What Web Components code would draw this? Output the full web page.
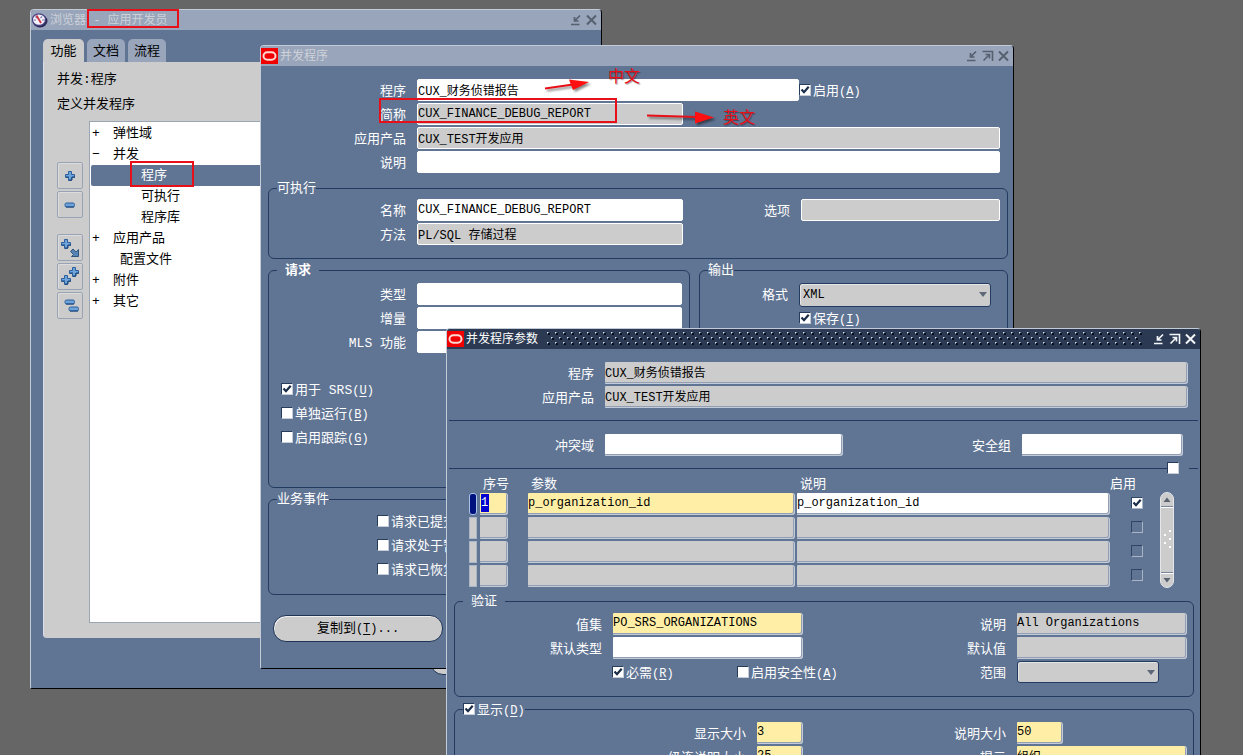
<!DOCTYPE html>
<html lang="zh-CN">
<head>
<meta charset="utf-8">
<title>并发程序参数</title>
<style>
  :root {
    --blue: #607493;
    --line: #233b60;
    --grey: #cccccc;
    --yellow: #ffefa6;
  }
  * { box-sizing: border-box; }
  html, body { height: 100%; }
  body {
    margin: 0;
    overflow: hidden;
    position: relative;
    background: #666666;
    color: #fff;
    font: 13px/22px "Liberation Mono", "Noto Sans CJK SC", monospace;
  }
  .nav { left: 30px; top: 9px; width: 572px; height: 680px; }
  .program { left: 260px; top: 45px; width: 754px; height: 624px; }
  .params { left: 446px; top: 328px; width: 755px; }

  .stack { display: flex; flex-direction: column; gap: 2px; }
  .row { display: flex; align-items: flex-start; }
  .end { margin-left: auto; }

  .program-body { padding: 13px 5px 0 7px; --label: 138px; }
  .program-body .head { padding-right: 8px; margin-bottom: 8px; }
  .program-body field-group { --label: 137px; margin-bottom: 4px; }
  .w-name { width: 531px; }
  .w-short { width: 415px; }
  .w-option { width: 270px; --label: 60px; }
  .pair { display: grid; grid-template-columns: 422fr 309fr; gap: 9px; }
  .pair .out { --label: 88px; }
  .checks { margin: 23px 0 0 12px; }
  .events { margin-left: 108px; }
  .copy { margin: 20px 0 0 5px; width: 170px; }

  .params-body { --label: 147px; padding-top: 13px; }
  .params-body .head { padding-right: 12px; }
  .params-body .domain { padding-right: 17px; }
  .rule { height: 1px; margin: 12px 2px 13px; background: var(--line); }
  .rule-row { display: flex; align-items: center; height: 12px; margin: 6px 2px 0; }
  .rule-row i { height: 1px; background: var(--line); flex: 1; }
  .rule-row i:last-child { flex: none; width: 9px; margin-left: 10px; }
  .params-body field-group { margin: 5px 6px 0 7px; }
  .w-half { width: 348px; }
  .w-dom { width: 396px; }
  .w-sec { width: 232px; --label: 60px; }
  .w-right { width: 241px; --label: 60px; }
  .needed { margin-left: 157px; width: 125px; }
</style>
</head>
<body>

<desk-window class="nav" icon="globe" heading="浏览器 - 应用开发员" controls="min close">
  <nav-panel></nav-panel>
</desk-window>

<desk-window class="program" icon="oracle" heading="并发程序" controls="min max close">
  <div class="program-body">
    <div class="stack head">
      <div class="row">
        <form-field class="w-name" label="程序" value="CUX_财务侦错报告"></form-field>
        <check-item checked text="启用" key="A"></check-item>
      </div>
      <form-field class="w-short" label="简称" value="CUX_FINANCE_DEBUG_REPORT" tone="grey"></form-field>
      <form-field label="应用产品" value="CUX_TEST开发应用" tone="grey"></form-field>
      <form-field label="说明"></form-field>
    </div>
    <field-group heading="可执行" style="--end:13px;--side:7px">
      <div class="row">
        <form-field class="w-short" style="width:414px" label="名称" value="CUX_FINANCE_DEBUG_REPORT"></form-field>
        <form-field class="w-option end" label="选项" tone="grey"></form-field>
      </div>
      <form-field style="width:414px" label="方法" value="PL/SQL 存储过程" tone="grey"></form-field>
    </field-group>
    <div class="pair">
      <field-group heading="请求" strong style="--start:6px;--end:39px;--side:7px">
        <form-field label="类型"></form-field>
        <form-field label="增量"></form-field>
        <form-field label="MLS 功能"></form-field>
        <div class="stack checks">
          <check-item checked text="用于 SRS" key="U"></check-item>
          <check-item text="单独运行" key="B"></check-item>
          <check-item text="启用跟踪" key="G"></check-item>
        </div>
      </field-group>
      <field-group class="out" heading="输出" style="--start:6px;--side:16px">
        <form-field label="格式" kind="select" value="XML"></form-field>
        <check-item checked text="保存" key="I" style="margin-left:99px"></check-item>
      </field-group>
    </div>
    <field-group heading="业务事件" style="--end:14px">
      <div class="stack events">
        <check-item text="请求已提交"></check-item>
        <check-item text="请求处于暂挂"></check-item>
        <check-item text="请求已恢复"></check-item>
      </div>
    </field-group>
    <push-button class="copy" text="复制到" key="T" tail="..."></push-button>
  </div>
</desk-window>

<desk-window class="params" active icon="oracle" heading="并发程序参数" controls="min max close">
  <div class="params-body">
    <div class="stack head">
      <form-field bevel label="程序" value="CUX_财务侦错报告" tone="grey"></form-field>
      <form-field bevel label="应用产品" value="CUX_TEST开发应用" tone="grey"></form-field>
    </div>
    <div class="rule"></div>
    <div class="row domain">
      <form-field bevel class="w-dom" label="冲突域"></form-field>
      <form-field bevel class="w-sec end" label="安全组"></form-field>
    </div>
    <div class="rule-row"><i></i><check-item bare name="弹性域"></check-item><i></i></div>
    <param-table></param-table>
    <field-group heading="验证" wide style="--start:5px;--end:13px;--side:6px">
      <div class="row">
        <form-field bevel class="w-half" label="值集" value="PO_SRS_ORGANIZATIONS" tone="yellow"></form-field>
        <form-field bevel class="w-right end" label="说明" value="All Organizations" tone="grey"></form-field>
      </div>
      <div class="row">
        <form-field bevel class="w-half" label="默认类型"></form-field>
        <form-field bevel class="w-right end" label="默认值" tone="grey"></form-field>
      </div>
      <div class="row">
        <check-item class="needed" checked text="必需" key="R"></check-item>
        <check-item text="启用安全性" key="A"></check-item>
        <form-field class="w-right end" label="范围" kind="select" style="--control:142px"></form-field>
      </div>
    </field-group>
    <field-group style="--start:6px;--end:40px;--side:6px">
      <check-item slot="heading" checked text="显示" key="D"></check-item>
      <div class="row">
        <form-field bevel class="w-half" style="--label:291px" label="显示大小" value="3" tone="yellow"></form-field>
        <form-field bevel class="w-right end" style="--control:46px" label="说明大小" value="50" tone="yellow"></form-field>
      </div>
      <div class="row">
        <form-field bevel class="w-half" style="--label:291px" label="级连说明大小" value="25" tone="yellow"></form-field>
        <form-field bevel class="w-right end" label="提示" value="组织" tone="yellow"></form-field>
      </div>
    </field-group>
  </div>
</desk-window>

<desk-notes></desk-notes>

<script>
const BASE = `*{box-sizing:border-box}`;
const tick = `url("data:image/svg+xml,%3Csvg xmlns='http://www.w3.org/2000/svg' width='10' height='10'%3E%3Cpath d='M1.5 4.5L4 7.2L8.7 1.8' fill='none' stroke='%23182c48' stroke-width='2.2'/%3E%3C/svg%3E")`;

const ICONS = {
  oracle: `<svg width="17" height="16" viewBox="0 0 17 16"><rect width="17" height="16" fill="#f00000"/><rect x="2.5" y="4.300" width="12" height="7.400" rx="3.700" fill="none" stroke="#ffd9d2" stroke-width="2"/></svg>`,
  globe: `<svg width="17" height="16" viewBox="0 0 17 16"><ellipse cx="9" cy="9" rx="7.5" ry="6.5" fill="#2c2856"/><ellipse cx="8" cy="7.6" rx="6.6" ry="5.8" fill="#f3f1fa" stroke="#484284" stroke-width="1.2"/><path d="M4.500 4.500L6 6M11 4.500L9.500 6M2.500 8H5M11 8H14" stroke="#7a76b0" stroke-width="1.200" fill="none"/><path d="M5.500 3.500L10 11" stroke="#cc3344" stroke-width="1.800"/></svg>`,
  min: `<svg width="13" height="14" viewBox="0 0 13 14"><path d="M11 2.500L6 7.500M5.500 4V8H9.500M2 11.500H10.500" fill="none" stroke="currentColor" stroke-width="1.700"/></svg>`,
  max: `<svg width="13" height="14" viewBox="0 0 13 14"><path d="M1.500 2.500H11.500V12M2.500 11.500L8 6M4.500 5.500H8.500V9.500" fill="none" stroke="currentColor" stroke-width="1.600"/></svg>`,
  close: `<svg width="13" height="14" viewBox="0 0 13 14"><path d="M2 2.500L11 11.500M11 2.500L2 11.500" fill="none" stroke="currentColor" stroke-width="2"/></svg>`
};

class Base extends HTMLElement {
  attr(n) { return this.getAttribute(n) || ''; }
  connectedCallback() {
    if (this.shadowRoot) return;
    this.attachShadow({ mode: 'open' }).innerHTML = `<style>${BASE}${this.css()}</style>${this.html()}`;
  }
}
const keyText = (t, k, tail = '') => t + (k ? `<span>(<u>${k}</u>)${tail}</span>` : '');

customElements.define('desk-window', class extends Base {
  css() { return `
    :host{position:absolute;display:flex;flex-direction:column;background:var(--blue);border:1px solid #c3cbd6;border-right-color:#000;border-bottom-color:#000;border-radius:4px 4px 2px 2px}
    header{display:flex;align-items:center;height:20px;flex:none;background:#98a5bb;color:#ced2d8;border-radius:3px 3px 0 0}
    :host([active]) header{background:#2b3a52;color:#fff}
    h1{font:12px/20px "Liberation Mono","Noto Sans CJK SC",monospace;margin:0 0 0 2px;padding-top:2px;white-space:nowrap}
    .grip{flex:1;height:14px;margin:0 10px 0 8px}
    .bar{display:flex;gap:3px;padding-right:3px;color:#56606f}
    :host([active]) .bar{color:#f4f6fa}
    .bar button{all:unset;display:block;width:13px;height:14px}
    svg{display:block}`; }
  html() {
    const names = { min: '最小化', max: '最大化', close: '关闭' };
    const dots = this.hasAttribute('active') ? `<svg width="100%" height="14"><defs><pattern id="d" width="8" height="10" patternUnits="userSpaceOnUse"><path d="M1 0h2v2h-2zM5 5h2v2h-2z" fill="#7d8ca8"/><path d="M2 1h2v2h-2zM6 6h2v2h-2z" fill="#060c18"/><path d="M1 0h1v1h-1zM5 5h1v1h-1z" fill="#d3dbea"/></pattern></defs><rect width="100%" height="14" fill="url(#d)"/></svg>` : '';
    return `<header>${ICONS[this.attr('icon')]}<h1>${this.attr('heading')}</h1><div class="grip">${dots}</div><div class="bar">${
      this.attr('controls').split(' ').map(c => `<button aria-label="${names[c]}">${ICONS[c]}</button>`).join('')}</div></header><slot></slot>`;
  }
});

customElements.define('form-field', class extends Base {
  css() { return `
    :host{display:flex;gap:11px;height:22px}
    label{flex:none;width:var(--label);text-align:right;line-height:22px;padding-top:2px;height:22px;white-space:nowrap}
    .box{position:relative;flex:1;min-width:0;max-width:var(--control,none)}
    input,select{display:block;width:100%;height:22px;margin:0;padding:0 0 1px;border:1px solid #fff;border-radius:2px;background:#fff;color:#000;outline:0;
      font:12px/18px "Liberation Mono","Noto Sans CJK SC",monospace}
    :host([tone=grey]) input{background:var(--grey)}
    :host([tone=yellow]) input{background:var(--yellow)}
    :host([bevel]) input{border:solid #c3cbd8;border-width:0 1px 1px 0;box-shadow:inset -1px -1px #929eb4;border-radius:1px 3px 3px 1px;padding:0 0 2px}
    select{appearance:none;height:24px;background:var(--grey);border:1px solid var(--line);border-radius:3px;box-shadow:inset 1px 1px #e6e6e6;padding:0 3px}
    :host([class*=right]) select{height:22px}
    .box svg{position:absolute;right:4px;top:9px}`; }
  html() {
    const v = this.attr('value');
    return `<label for="f">${this.attr('label')}</label><div class="box">${this.attr('kind') === 'select'
      ? `<select id="f"><option>${v}</option></select><svg width="8" height="5"><path d="M0 0H8L4 5Z" fill="#5d6878"/></svg>`
      : `<input id="f" value="${v}">`}</div>`;
  }
});

customElements.define('check-item', class extends Base {
  css() { return `
    :host{display:block}
    label{display:flex;align-items:center;gap:2px;height:22px;white-space:nowrap}
    :host([bare]) label{height:12px}
    b{font-weight:400;padding-top:3px}
    span{font-size:12px}
    u{text-underline-offset:2px}
    input{appearance:none;flex:none;width:12px;height:12px;margin:0;background:#fff;border:1px solid #263c5b;border-right-color:#c5ccd7;border-bottom-color:#c5ccd7}
    input:checked{background:#fff ${tick} no-repeat center}`; }
  html() {
    const t = this.attr('text');
    return `<label><input type="checkbox" ${this.hasAttribute('checked') ? 'checked' : ''} ${t ? '' : `aria-label="${this.attr('name')}"`}>${t ? `<b>${keyText(t, this.attr('key'))}</b>` : ''}</label>`;
  }
});

customElements.define('field-group', class extends Base {
  css() { return `
    :host{display:block}
    fieldset{min-width:0;height:100%;margin:0;border:1px solid var(--line);border-radius:6px;padding:var(--start,4px) var(--side,0) var(--end,0) 0}
    legend{margin-left:8px;padding:0;line-height:16px;height:14px}
    :host([strong]) legend,:host([wide]) legend{padding:0 8px}
    :host([strong]) legend{font-weight:700}
    ::slotted([slot=heading]){margin:-4px 0 0}
    div{display:flex;flex-direction:column;gap:2px}`; }
  html() { return `<fieldset><legend>${this.attr('heading')}<slot name="heading"></slot></legend><div><slot></slot></div></fieldset>`; }
});

customElements.define('push-button', class extends Base {
  css() { return `
    :host{display:block}
    button{display:block;width:100%;height:27px;border:1px solid #1f3455;border-radius:13px;background:var(--grey);box-shadow:inset 1px 1px #eee;color:#000;font:13px/20px "Liberation Mono","Noto Sans CJK SC",monospace;padding:0}
    span{font-size:12px} u{text-underline-offset:2px}`; }
  html() { return `<button aria-label="${this.attr('name') || this.attr('text')}">${keyText(this.attr('text'), this.attr('key'), this.attr('tail'))}</button>`; }
});

customElements.define('tool-button', class extends Base {
  css() { return `
    :host{display:block}
    button{display:grid;place-items:center;width:26px;height:27px;padding:0;background:var(--grey);border:1px solid #98a4b6;border-radius:2px;box-shadow:inset 1px 1px #dcdcdc}
    svg{display:block}`; }
  html() {
    const plus = (x, y) => `<path transform="translate(${x} ${y})" d="M3.500 .5h3v3h3v3h-3v3h-3v-3h-3v-3h3z" fill="#6ba3da" stroke="#2d5f9c"/><path transform="translate(${x} ${y})" d="M1 6h3M4 9h3V6h3" fill="none" stroke="#1d4478"/>`;
    const minus = (x, y) => `<rect x="${x}" y="${y}" width="9.500" height="4" rx="1.500" fill="#6ba3da" stroke="#2d5f9c"/><path d="M${x + 1} ${y + 4}h8" stroke="#1d4478"/>`;
    const art = {
      expand: plus(5, 5), collapse: minus(5, 8),
      branch: plus(1, 1) + `<path d="M18.500 11.500V18.500H11.500L13.500 16.500L10.500 13.500L13 11L16 14Z" fill="#5585b5" stroke="#2d5580"/>`,
      all: plus(9, 0) + plus(1, 8), none: minus(5, 4) + minus(9, 11)
    };
    return `<button aria-label="${this.attr('name')}"><svg width="20" height="20" viewBox="0 0 20 20">${art[this.attr('art')]}</svg></button>`;
  }
});

customElements.define('nav-tree', class extends Base {
  css() { return `
    :host{display:block;background:#fff;border:1px solid #9aa5b6;border-right:0;color:#000}
    ul{list-style:none;margin:0;padding:1px 0 0 1px}
    li{display:flex;height:21px;line-height:21px;padding-left:1px}
    i{font-style:normal;width:21px;flex:none}
    .child{padding-left:50px}
    .leaf{padding-left:29px}
    .on{background:var(--blue);color:#fff;border-radius:2px}`; }
  html() {
    const items = [['+','弹性域'],['−','并发'],['','程序','child on'],['','可执行','child'],['','程序库','child'],['+','应用产品'],['','配置文件','leaf'],['+','附件'],['+','其它']];
    return `<ul>${items.map(([m, t, c = '']) => `<li class="${c}">${m ? `<i>${m}</i>` : ''}${t}</li>`).join('')}</ul>`;
  }
});

customElements.define('nav-panel', class extends Base {
  css() { return `
    :host{flex:1;display:flex;flex-direction:column;padding:9px 12px 13px;color:#000}
    .tabs{display:flex;gap:3px}
    .tabs button{height:23px;width:38px;padding:3px 0 0;border:0;border-radius:5px 5px 0 0;background:#98a5bb;color:#000;font:13px/20px "Liberation Mono","Noto Sans CJK SC",monospace}
    .tabs .on{width:41px;background:var(--grey)}
    .panel{flex:1;display:flex;flex-direction:column;background:var(--grey);border-radius:0 0 4px 4px;padding:5px 0 15px;border-left:1px solid #dde}
    p{margin:0 0 0 13px;line-height:25px;height:25px}
    .main{flex:1;display:flex;margin-top:4px}
    .tools{width:45px;flex:none;padding:41px 0 0 13px;display:flex;flex-direction:column;gap:2px}
    .tools .next{margin-top:14px}
    nav-tree{flex:1}
    push-button{width:120px;margin:10px 0 0 387px}`; }
  html() { return `
    <div class="tabs"><button class="on">功能</button><button>文档</button><button>流程</button></div>
    <div class="panel"><p>并发:程序</p><p>定义并发程序</p>
      <div class="main"><div class="tools">
        <tool-button art="expand" name="展开"></tool-button><tool-button art="collapse" name="折叠"></tool-button>
        <tool-button class="next" art="branch" name="展开分支"></tool-button><tool-button art="all" name="全部展开"></tool-button><tool-button art="none" name="全部折叠"></tool-button>
      </div><nav-tree></nav-tree></div>
    </div>
    <push-button name="打开"></push-button>`; }
});

customElements.define('param-table', class extends Base {
  css() { return `
    :host{display:flex;align-items:flex-end;margin-left:22px;padding-right:26px}
    table{flex:1;border-collapse:collapse;table-layout:fixed}
    th{font-weight:400;text-align:left;line-height:21px;height:19px;padding:0 0 0 3px;white-space:nowrap}
    th div{height:19px}
    th:last-child{padding:0}
    td{padding:0;height:24px;vertical-align:top}
    td>*{display:block}
    .mark{width:8px;height:22px;background:var(--grey);border:1px solid #aab5c6}
    .on .mark{background:#00107c;border-radius:3px;border-color:#a9c3ee}
    input[type=text]{width:calc(100% - 2px);height:22px;margin:0;padding:0 0 1px;background:var(--grey);color:#000;outline:0;border:solid #c3cbd8;border-width:0 1px 1px 0;box-shadow:inset -1px -1px #929eb4;border-radius:1px 3px 3px 1px;font:12px/19px "Liberation Mono","Noto Sans CJK SC",monospace}
    input.seq[type=text]{width:28px;padding-left:1px}
    input.desc[type=text]{width:100%}
    .on input[type=text]{background:var(--yellow)}
    .on input.seq[type=text]{color:#fff;background:linear-gradient(#0000d0,#0000d0) 1px 1px/8px 18px no-repeat var(--yellow)}
    .on input.desc[type=text]{background:#fff}
    input[type=checkbox]{appearance:none;width:12px;height:12px;margin:4px 0 0 21px;background:var(--blue);border:1px solid #2f4566;border-right-color:#a9b4c6;border-bottom-color:#a9b4c6}
    input[type=checkbox]:checked{background:#fff ${tick} no-repeat center}
    .scroll{width:14px;height:96px;margin-bottom:1px;border-radius:7px;background:var(--grey);border:1px solid #e4e6ea;display:flex;flex-direction:column}
    .scroll svg{display:block}`; }
  html() {
    const row = (n, p, on) => `<tr class="${on ? 'on' : ''}"><td><span class="mark"></span></td><td><input type="text" class="seq" aria-label="序号" value="${n}"></td><td><input type="text" aria-label="参数" value="${p}"></td><td><input type="text" class="desc" aria-label="说明" value="${p}"></td><td><input type="checkbox" aria-label="启用" ${on ? 'checked' : ''}></td></tr>`;
    return `<table><colgroup><col style="width:11px"><col style="width:48px"><col style="width:269px"><col><col style="width:50px"></colgroup>
      <thead><tr><th></th><th><div>序号</div></th><th><div>参数</div></th><th><div>说明</div></th><th><div>启用</div></th></tr></thead>
      <tbody>${row('1', 'p_organization_id', true)}${row('', '')}${row('', '')}${row('', '')}</tbody></table>
      <div class="scroll"><svg width="12" height="94" viewBox="0 0 12 94"><path d="M2.500 9L6 4.500L9.500 9ZM2.500 85L6 89.500L9.500 85Z" fill="#5a6272"/><path d="M0 13.500H12M0 79.500H12" stroke="#77849a"/><path d="M0 14.500H12M0 80.500H12" stroke="#fff"/><path d="M8 37h2v2h-2zM3 41h2v2h-2zM8 45h2v2h-2zM3 49h2v2h-2zM8 53h2v2h-2z" fill="#fff"/></svg></div>`;
  }
});

customElements.define('desk-notes', class extends Base {
  css() { return `
    :host{position:absolute;inset:0;pointer-events:none;color:#e81018}
    svg{position:absolute;left:0;top:0;overflow:visible}
    span{position:absolute;font-size:16px;line-height:20px;text-shadow:1px 1px 1px #0006}
    .a{left:608px;top:68px} .b{left:723px;top:109px}`; }
  html() { return `
    <svg width="760" height="200" fill="none"><g stroke="#e81018" stroke-width="2"><rect x="88" y="10" width="90" height="17"/><rect x="131" y="162" width="62" height="24"/><rect x="380" y="99" width="236" height="23"/></g>
    <g style="filter:drop-shadow(2px 2px 1px #0007)"><path d="M545 88.500L573 84.500" stroke="#e81018" stroke-width="2"/><path d="M569 79.500L589 82L573 90L571 85Z" fill="#ff1010"/><path d="M647 115.500L697 117" stroke="#e81018" stroke-width="2"/><path d="M695 111.500L714 117.500L695 123.500Z" fill="#ff1010"/></g></svg>
    <span class="a">中文</span><span class="b">英文</span>`; }
});
</script>
</body>
</html>
